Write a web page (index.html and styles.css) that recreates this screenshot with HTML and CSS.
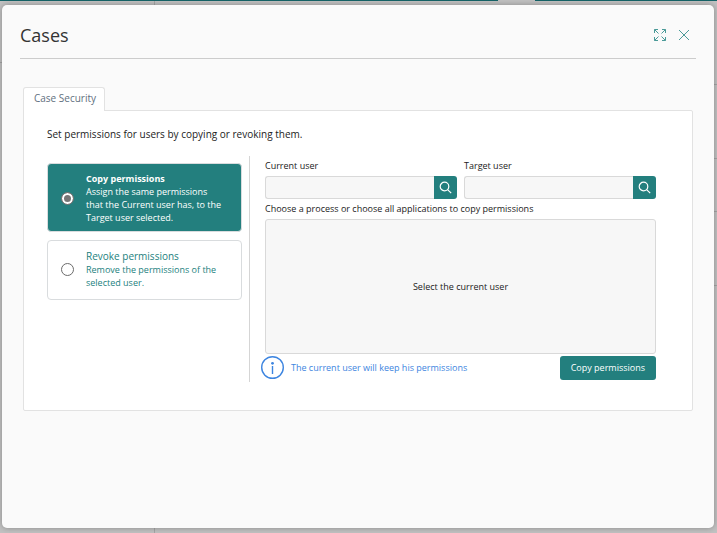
FILE: index.html
```html
<!DOCTYPE html>
<html lang="en">
<head>
  <meta charset="UTF-8">
  <title>Cases</title>
  <link rel="stylesheet" href="styles.css">
</head>
<body>

<div class="backdrop">
  <div class="topbar"><span class="topbar-tab"></span></div>
  <div class="page">
    <div class="sidebar"><div class="sidebar-head"></div></div>
    <div class="content">
      <div class="row head"></div>
      <div class="row"></div>
      <div class="row short"></div>
      <div class="row"></div>
    </div>
  </div>
</div>

<div class="modal" role="dialog" aria-labelledby="title">
  <header class="modal-header">
    <h1 id="title">Cases</h1>
    <div class="tools">
      <button type="button" class="tool" aria-label="Expand">
        <svg width="14" height="14" viewBox="0 0 14 14">
          <path d="M1.5 5V1.500H5M9 1.500h3.500V5M12.500 9v3.500H9M5 12.500H1.500V9M1.500 1.500l4 4M12.500 1.500l-4 4M12.500 12.500l-4-4M1.500 12.500l4-4"/>
        </svg>
      </button>
      <button type="button" class="tool" aria-label="Close">
        <svg width="14" height="14" viewBox="0 0 14 14">
          <path d="M2 2l10 10M12 2L2 12"/>
        </svg>
      </button>
    </div>
  </header>

  <div class="tabs">
    <button type="button" class="tab">Case Security</button>
  </div>

  <section class="panel">
    <p class="intro">Set permissions for users by <span class="strong">copying</span> or <span class="strong">revoking</span> <span class="strong">them.</span></p>
    <div class="columns">
      <div class="options">
        <label class="option active">
          <input type="radio" name="action" checked>
          <span><b>Copy permissions</b>Assign the same permissions that the Current user has, to the Target user selected.</span>
        </label>
        <label class="option">
          <input type="radio" name="action">
          <span><b>Revoke permissions</b>Remove the permissions of the selected user.</span>
        </label>
      </div>

      <div class="form">
        <div class="fields">
          <div class="field">
            <label for="currentUser">Current user</label>
            <div class="search">
              <input type="text" id="currentUser">
              <button type="button" aria-label="Search current user">
                <svg width="13" height="13" viewBox="0 0 13 13"><circle cx="5.5" cy="5.5" r="4.3"/><path d="M8.6 8.6l3.6 3.6"/></svg>
              </button>
            </div>
          </div>
          <div class="field">
            <label for="targetUser">Target user</label>
            <div class="search">
              <input type="text" id="targetUser">
              <button type="button" aria-label="Search target user">
                <svg width="13" height="13" viewBox="0 0 13 13"><circle cx="5.5" cy="5.5" r="4.3"/><path d="M8.6 8.6l3.6 3.6"/></svg>
              </button>
            </div>
          </div>
        </div>
        <p class="caption">Choose a process or choose all applications to copy permissions</p>
        <div class="list">Select the current user</div>
        <div class="actions">
          <div class="info">
            <svg width="24" height="24" viewBox="0 0 24 24">
              <circle cx="11.5" cy="11.5" r="10.8"/><path d="M11.500 10v8"/><circle class="dot" cx="11.5" cy="7.3" r="1.4"/>
            </svg>
            <span>The current user will keep his permissions</span>
          </div>
          <button type="button" class="submit">Copy permissions</button>
        </div>
      </div>
    </div>
  </section>
</div>

</body>
</html>
```

FILE: styles.css
```css
* {
  box-sizing: border-box;
}
body {
  margin: 0;
  min-height: 100vh;
  display: flex;
  padding: 5px 3px 5px 2px;
  font: 9px/13px "Open Sans", "Noto Sans", sans-serif;
  color: #222;
}
h1, p {
  margin: 0;
  font-weight: normal;
}
button, input {
  font: inherit;
  margin: 0;
}
button {
  padding: 0;
  border: none;
  cursor: pointer;
}

/* dimmed page behind the dialog */
.backdrop {
  position: absolute;
  inset: 0;
  display: flex;
  flex-direction: column;
  background: #c2c2c2;
}
.topbar {
  height: 1px;
  background: #156468;
  display: flex;
  justify-content: flex-end;
  padding-right: 182px;
}
.topbar-tab {
  width: 37px;
  background: #c2c2c2;
}
.page {
  flex: 1;
  display: flex;
}
.sidebar {
  width: 155px;
  border-right: 1px solid #a6a6a6;
}
.sidebar-head {
  height: 62px;
  border-bottom: 1px solid #a6a6a6;
}
.content {
  flex: 1;
}
.row {
  height: 74px;
  border-bottom: 1px solid #a6a6a6;
}
.row.head {
  height: 84px;
}
.row.short {
  height: 53px;
}

.modal {
  position: relative;
  flex: 1;
  padding: 0 18px;
  background: #fafafa;
  border-radius: 5px;
  box-shadow: 0 0 6px rgba(0, 0, 0, 0.3);
}
.modal-header {
  display: flex;
  justify-content: space-between;
  align-items: center;
  height: 54px;
  padding: 6px 5px 0 0;
  border-bottom: 1px solid #ccc;
}
h1 {
  font-size: 18px;
  line-height: 24px;
  color: #333;
}
.tools {
  display: flex;
  gap: 10px;
}
.tool {
  display: flex;
  background: none;
}
svg {
  fill: none;
  stroke: #23807f;
}
.tool svg {
  stroke: #4a9a98;
}

.tabs {
  display: flex;
  padding: 28px 3px 0;
}
.tab {
  position: relative;
  z-index: 1;
  height: 24px;
  margin-bottom: -1px;
  padding: 0 8px 3px 10px;
  background: #fff;
  border: 1px solid #e2e2e2;
  border-bottom: none;
  border-radius: 3px 3px 0 0;
  font-size: 10px;
  color: #5f6f80;
}
.panel {
  margin: 0 3px;
  padding: 17px 36px 28px 23px;
  background: #fff;
  border: 1px solid #e2e2e2;
  border-radius: 0 2px 2px 2px;
}
.intro {
  font-size: 10px;
}
.strong {
  font-weight: 500;
}
.columns {
  display: flex;
  gap: 7px;
  margin-top: 15px;
}
.options {
  flex: 0 0 195px;
  display: flex;
  flex-direction: column;
  gap: 8px;
  padding-top: 7px;
}
.option {
  display: flex;
  align-items: center;
  gap: 12px;
  min-height: 60px;
  padding: 7px 18px 8px 13px;
  border: 1px solid #d9dcde;
  border-radius: 4px;
  color: #237f7e;
}
.option.active {
  padding-top: 8px;
  padding-bottom: 7px;
  background: #237f7e;
  color: #fff;
  font-weight: 500;
}
.option b {
  display: block;
  font-size: 10px;
  font-weight: 500;
}
.option.active b {
  font-size: 9px;
  font-weight: 700;
}
.option input {
  appearance: none;
  flex: none;
  width: 13px;
  height: 13px;
  border: 1px solid #6b6b6b;
  border-radius: 50%;
  background: #fff;
}
.option input:checked {
  background: #767676;
  border-color: #767676;
  box-shadow: inset 0 0 0 2px #fff;
}

.form {
  flex: 1;
  padding-left: 15px;
  border-left: 1px solid #d5d5d5;
}
.fields {
  display: flex;
  gap: 7px;
  padding-top: 3px;
}
.field {
  flex: 1;
}
.field label {
  display: block;
  margin-bottom: 4px;
}
.search {
  display: flex;
  height: 23px;
}
.search input {
  flex: 1;
  min-width: 0;
  background: #f7f7f7;
  border: 1px solid #d9d9d9;
  border-right: none;
  border-radius: 3px 0 0 3px;
}
.search button {
  width: 23px;
  display: flex;
  align-items: center;
  justify-content: center;
  background: #237f7e;
  border-radius: 0 3px 3px 0;
}
.search svg {
  stroke: #fff;
  stroke-width: 1.2;
}
.caption {
  margin: 3px 0 4px;
}
.list {
  display: flex;
  align-items: center;
  justify-content: center;
  height: 135px;
  background: #f7f7f7;
  border: 1px solid #d9d9d9;
  border-radius: 3px;
}
.actions {
  display: flex;
  justify-content: space-between;
  margin: 2px 0 2px -4px;
}
.info {
  display: flex;
  align-items: center;
  gap: 6px;
  color: #3d85e0;
}
.info span {
  padding-bottom: 2px;
}
.info svg {
  stroke: #3d85e0;
  stroke-width: 1.4;
}
.info .dot {
  fill: #3d85e0;
  stroke: none;
}
.submit {
  height: 24px;
  padding: 0 11px 2px;
  background: #237f7e;
  border-radius: 3px;
  color: #fff;
  font-weight: 500;
}
```
